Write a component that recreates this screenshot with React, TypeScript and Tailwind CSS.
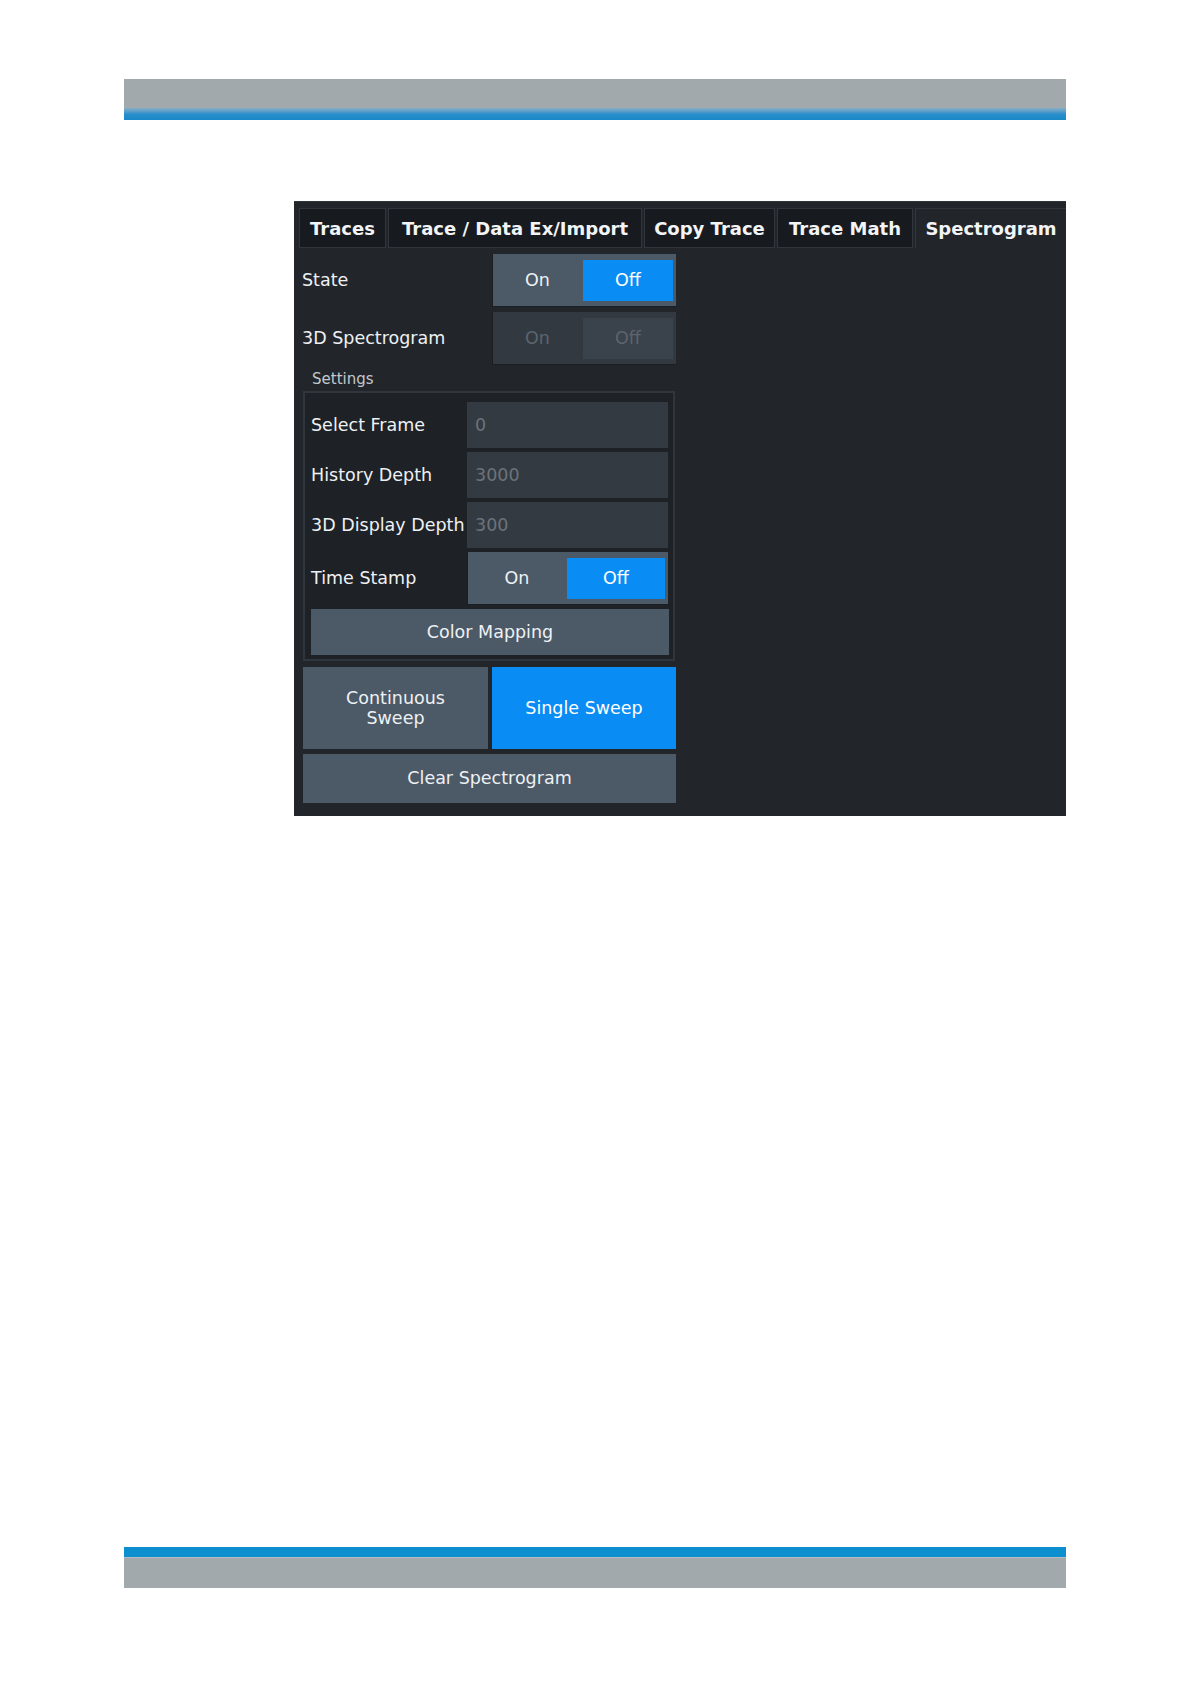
import React from "react";

const tabs = [
    { label: "Traces", w: "w-[87px]" },
    { label: "Trace / Data Ex/Import", w: "w-[254px]" },
    { label: "Copy Trace", w: "w-[131px]" },
    { label: "Trace Math", w: "w-[136px]" },
];

function Toggle({
    disabled = false,
    wide = false,
}: {
    disabled?: boolean;
    wide?: boolean;
}) {
    return (
        <div
            className={`flex h-[53px] items-stretch pt-[6px] pb-[6px] pr-[3px] shadow-[inset_1px_0_0_#1a1d21,inset_0_-1px_0_#1a1d21] ${
                disabled ? "bg-[#323941] text-[#5c646d]" : "bg-[#4c5967] text-[#eef1f4]"
            } ${wide ? "w-[201px]" : "w-[184px]"}`}
        >
            <div className="flex flex-1 items-center justify-center">On</div>
            <div
                className={`flex items-center justify-center ${
                    disabled ? "bg-[#3a424b]" : "bg-[#0a8cf5] text-white"
                } ${wide ? "w-[98px]" : "w-[90px]"}`}
            >
                Off
            </div>
        </div>
    );
}

function ValueField({ value }: { value: string }) {
    return (
        <div className="flex h-[46px] w-[201px] items-center bg-[#343a41] pl-[8px] text-[#6b737b]">
            {value}
        </div>
    );
}

export default function App() {
    return (
        <div className="relative flex h-[1684px] w-[1191px] flex-col bg-white font-['DejaVu_Sans',sans-serif]">
            {/* page header strip */}
            <div className="ml-[124px] mt-[79px] flex w-[942px] flex-col">
                <div className="h-[29px] bg-[#a1a9ad]" />
                <div className="h-[12px] bg-gradient-to-b from-[#86aec6] via-[#2a8fcc] to-[#1a88c9]" />
            </div>

            {/* instrument dialog */}
            <div className="ml-[294px] mt-[81px] flex h-[615px] w-[772px] flex-col bg-[#22262b] text-[17.5px] text-[#eef1f4] shadow-[inset_0_1px_0_#30353b]">
                <div className="flex h-[47px] items-end gap-[2px] pl-[5px]">
                    {tabs.map((t) => (
                        <div
                            key={t.label}
                            className={`flex h-[40px] items-center justify-center whitespace-nowrap border border-[#30363d] bg-[#171a1e] text-[18px] font-bold text-[#f2f4f6] ${t.w}`}
                        >
                            {t.label}
                        </div>
                    ))}
                    <div className="flex h-[40px] flex-1 items-center justify-center border-l border-t border-[#30363d] text-[18px] font-bold text-[#f2f4f6]">
                        Spectrogram
                    </div>
                </div>

                <div className="flex flex-col pl-[8px] pt-[6px]">
                    <div className="grid grid-cols-[190px_184px] items-center">
                        <span>State</span>
                        <Toggle />
                    </div>
                    <div className="mt-[5px] grid grid-cols-[190px_184px] items-center">
                        <span>3D Spectrogram</span>
                        <Toggle disabled />
                    </div>
                </div>

                <div className="ml-[18px] mt-[2px] h-[24px] text-[15px] leading-[24px] text-[#c3c8cd]">
                    Settings
                </div>

                <div className="ml-[9px] flex h-[270px] w-[372px] flex-col gap-[4px] border-2 border-[#30363d] bg-[#1e2125] pl-[6px] pr-[5px] pt-[9px]">
                    <div className="grid grid-cols-[156px_201px] items-center">
                        <span>Select Frame</span>
                        <ValueField value="0" />
                    </div>
                    <div className="grid grid-cols-[156px_201px] items-center">
                        <span>History Depth</span>
                        <ValueField value="3000" />
                    </div>
                    <div className="grid grid-cols-[156px_201px] items-center">
                        <span className="whitespace-nowrap">3D Display Depth</span>
                        <ValueField value="300" />
                    </div>
                    <div className="grid grid-cols-[156px_201px] items-center">
                        <span>Time Stamp</span>
                        <Toggle wide />
                    </div>
                    <div className="flex h-[46px] w-[358px] items-center justify-center bg-[#4c5967]">
                        Color Mapping
                    </div>
                </div>

                <div className="ml-[9px] mt-[6px] flex w-[373px] gap-[4px]">
                    <div className="flex h-[82px] w-[185px] items-center justify-center bg-[#4c5967] text-center leading-[20px]">
                        Continuous
                        <br />
                        Sweep
                    </div>
                    <div className="flex h-[82px] flex-1 items-center justify-center bg-[#0a8cf5] text-white">
                        Single Sweep
                    </div>
                </div>

                <div className="ml-[9px] mt-[5px] flex h-[49px] w-[373px] items-center justify-center bg-[#4c5967]">
                    Clear Spectrogram
                </div>
            </div>

            {/* page footer strip */}
            <div className="ml-[124px] mt-[731px] flex w-[942px] flex-col">
                <div className="h-[10px] bg-[#0b8fcf]" />
                <div className="h-[31px] bg-[#a1a9ad] shadow-[inset_0_1px_0_#b4bcc0]" />
            </div>
        </div>
    );
}
